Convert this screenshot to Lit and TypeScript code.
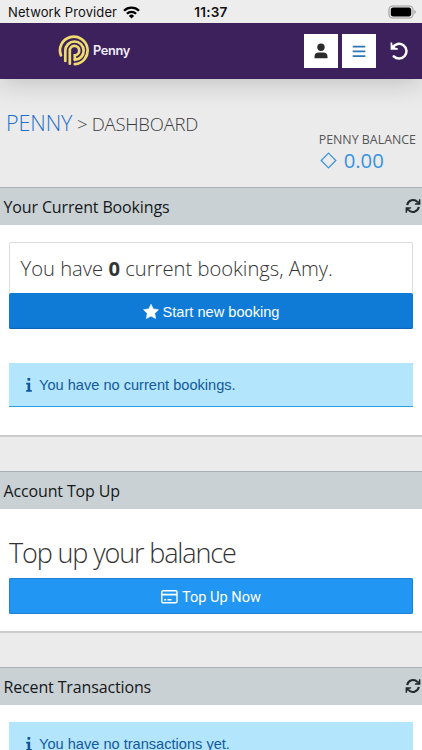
import { LitElement, html, css } from "lit";
import { customElement, property } from "lit/decorators.js";

const refresh = html`<svg class="refresh" viewBox="0 0 16 16" width="16" height="16">
  <g fill="none" stroke="#22282b" stroke-width="2">
    <path d="M2.2 7.1A6 6 0 0 1 12.6 4.1" /><path d="M13.8 8.9A6 6 0 0 1 3.4 11.9" />
  </g>
  <path fill="#22282b" d="M15.4 1.3v5.5H9.9v-1.4l1.6-.2 2.3-2.3.2-1.6zM.6 14.7V9.2h5.5v1.4l-1.6.2-2.3 2.3-.2 1.6z" />
</svg>`;

@customElement("status-bar")
export class StatusBar extends LitElement {
  static styles = css`
    :host { display: flex; align-items: center; height: 23px; background: #ededee; color: #111;
      font: 13px/23px Inter, sans-serif; padding: 1px 6px 0 8px; box-sizing: border-box; position: relative; z-index: 1; }
    .carrier { flex: 1; display: flex; align-items: center; gap: 6px; letter-spacing: 0.11px; }
    .time { font-size: 13.6px; font-weight: 600; letter-spacing: 0.2px; margin-right: 2px; }
    .battery { flex: 1; display: flex; justify-content: flex-end; margin-top: -1px; }
    svg { display: block; }
  `;
  render() {
    return html`
      <div class="carrier">
        <span>Network Provider</span>
        <svg width="17" height="13" viewBox="0 0 17 13" fill="none" stroke="#000" stroke-width="2.3">
          <path d="M1 4.7a10.6 10.6 0 0 1 15 0" /><path d="M3.9 7.7a6.5 6.5 0 0 1 9.2 0" />
          <path d="M8.5 12.6 5.9 9.9a3.7 3.7 0 0 1 5.2 0z" fill="#000" stroke="none" />
        </svg>
      </div>
      <div class="time">11:37</div>
      <div class="battery">
        <svg width="28" height="14" viewBox="0 0 28 14">
          <rect x="1" y="1" width="24" height="12" rx="3.6" fill="none" stroke="#9b9b9d" stroke-width="1.1" />
          <rect x="2.8" y="2.6" width="20.4" height="8.8" rx="2.2" />
          <path d="M26.4 5v4q1.3-.7 1.3-2t-1.3-2z" fill="#9b9b9d" />
        </svg>
      </div>`;
  }
}

@customElement("top-nav")
export class TopNav extends LitElement {
  static styles = css`
    :host { display: flex; align-items: center; height: 56px; background: #3d215d; padding: 0 14px 0 58px;
      box-sizing: border-box; box-shadow: 0 3px 28px rgba(0, 0, 0, 0.2); position: relative; }
    .brand { flex: 1; display: flex; align-items: center; gap: 3px; color: #f2edf8;
      font: 600 12.8px/16px Inter, sans-serif; letter-spacing: -0.35px; }
    .tile { width: 34px; height: 34px; background: #fff; margin-right: 4px; display: grid; place-items: center; }
    .undo { margin-left: 10px; }
    svg { display: block; }
  `;
  render() {
    return html`
      <div class="brand">
        <svg width="32" height="32" viewBox="0 0 32 32" fill="none" stroke="#efdc6c" stroke-width="2.7" stroke-linecap="round">
          <path d="M2.9 20.3A13.8 13.8 0 1 1 16.8 29.2" />
          <path d="M7.3 26V15.6A9.2 9.2 0 1 1 16.8 24.9" />
          <path d="M11.8 28.7V15.8A4.7 4.7 0 1 1 16.8 20.3V24" />
        </svg>
        <span>Penny</span>
      </div>
      <div class="tile"><svg width="14" height="16" viewBox="0 0 14 16" fill="#2b2b2b">
        <circle cx="7" cy="4.2" r="3.7" /><path d="M.5 15.3v-1.6A4.3 4.3 0 0 1 4.8 9.5h4.4a4.3 4.3 0 0 1 4.3 4.2v1.6z" /></svg></div>
      <div class="tile"><svg width="14" height="13" viewBox="0 0 14 13" stroke="#2e75b6" stroke-width="1.7">
        <path d="M.7 1.6h12.6M.7 6.4h12.6M.7 11.2h12.6" /></svg></div>
      <svg class="undo" width="18" height="18" viewBox="0 0 18 18" fill="none" stroke="#fff" stroke-width="2.5">
        <path d="M2.7 5.4A7.4 7.4 0 1 1 3.8 14.4" stroke-linecap="round" /><path d="M.6.6v7.2h7.2v-1.6L5 5.6 2.4 3 2.2.6z" fill="#fff" stroke="none" />
      </svg>`;
  }
}

@customElement("app-panel")
export class AppPanel extends LitElement {
  @property() heading = "";
  @property({ type: Boolean }) refreshable = false;
  static styles = css`
    :host { display: block; background: #fff; border-bottom: 2px solid #cbcbcd; }
    header { height: 38px; box-sizing: border-box; border-top: 1px solid #a9b0b4; background: #cad1d4;
      display: flex; align-items: center; justify-content: space-between; padding: 0 1px 0 3.5px;
      color: #14181a; font: 16px/24px "Open Sans", sans-serif; }
    .title { letter-spacing: -0.14px; }
    .refresh { display: block; margin-top: -2px; }
    .body { padding: 17px 9px 0; }
  `;
  render() {
    return html`<header><span class="title">${this.heading}</span>${this.refreshable ? refresh : ""}</header>
      <div class="body"><slot></slot></div>`;
  }
}

@customElement("info-alert")
export class InfoAlert extends LitElement {
  static styles = css`
    :host { display: flex; align-items: center; height: 44px; box-sizing: border-box; background: #b3e5fc;
      border-bottom: 1px solid #2c9fdc; padding: 1px 0 0 17px; gap: 7px; color: #125a9c;
      font: 14.6px/20px "Liberation Sans", sans-serif; }
    svg { display: block; }
  `;
  render() {
    return html`<svg width="6" height="14" viewBox="0 0 6 14" fill="#0f569b">
        <rect x="1.5" y="0" width="2.7" height="2.7" rx=".6" /><path d="M.2 4.7h4v7.2h1.6v1.8H.2v-1.8h1.4V6.5H.2z" />
      </svg><span><slot></slot></span>`;
  }
}

@customElement("app-root")
export class AppRoot extends LitElement {
  static styles = css`
    :host { display: block; height: 750px; overflow: hidden; background: #ecebec; font-family: "Open Sans", sans-serif; }
    .intro { height: 108px; box-sizing: border-box; display: grid; grid-template-columns: 1fr auto; padding: 29px 6px 0; }
    .crumbs { font-size: 18.5px; line-height: 30px; font-weight: 300; color: #3c3c3c; letter-spacing: -0.24px; white-space: nowrap; }
    .crumbs a { font-size: 21.5px; color: #1f6fc6; letter-spacing: -0.1px; }
    .balance { padding-top: 24px; color: #555; font-size: 12.4px; line-height: 16px; }
    .amount { display: flex; align-items: center; gap: 7px; color: #3593df; font-size: 20.3px; line-height: 25px; padding-left: 1px; }
    .bookings { height: 250px; box-sizing: border-box; }
    .topup { height: 162px; box-sizing: border-box; margin: 34px 0; }
    .greeting { height: 51px; box-sizing: border-box; border: 1px solid #dcdcdc; border-bottom: 0; border-radius: 2px 2px 0 0;
      padding: 10px 10.5px 0; font-size: 20.2px; line-height: 30px; font-weight: 300; color: #333; white-space: nowrap; }
    .greeting b { font-weight: 700; }
    .button { height: 36px; box-sizing: border-box; border-radius: 2px; background: #0f7bd7; color: #fff; display: flex;
      align-items: center; justify-content: center; gap: 4px; box-shadow: inset 0 -1px 1px #0a63b5; padding-top: 1px;
      font: 14.6px/20px "Liberation Sans", sans-serif; }
    .light { background: #2196f3; box-shadow: inset 0 0 0 1px #1c80d3; font: 14.6px/20px Roboto, sans-serif; padding-top: 2px; }
    .alert { margin-top: 34px; }
    .lead { font-size: 27px; line-height: 36px; font-weight: 300; color: #333; letter-spacing: -1.13px; margin: 9px 0 7px; white-space: nowrap; }
    svg { display: block; }
  `;
  render() {
    return html`
      <status-bar></status-bar>
      <top-nav></top-nav>
      <div class="intro">
        <div class="crumbs"><a>PENNY</a> &gt; DASHBOARD</div>
        <div class="balance">
          <div class="label">PENNY BALANCE</div>
          <div class="amount">
            <svg width="17" height="17" viewBox="0 0 17 17" fill="none" stroke="currentColor" stroke-width="1.2"><path d="m8.5 1.2 7.3 7.3-7.3 7.3L1.2 8.5z" /></svg>
            <span>0.00</span>
          </div>
        </div>
      </div>
      <app-panel class="bookings" heading="Your Current Bookings" refreshable>
        <div class="greeting">You have <b>0</b> current bookings, Amy.</div>
        <div class="button">
          <svg width="16" height="15" viewBox="0 0 16 15" fill="#fff"><path d="m8 .3 2.3 4.6 5.2.8-3.7 3.6.8 5.2L8 12.1l-4.6 2.4.8-5.2L.5 5.7l5.2-.8z" stroke="#fff" stroke-width=".6" stroke-linejoin="round" /></svg>
          <span>Start new booking</span>
        </div>
        <info-alert class="alert">You have no current bookings.</info-alert>
      </app-panel>
      <app-panel class="topup" heading="Account Top Up">
        <div class="lead">Top up your balance</div>
        <div class="button light">
          <svg width="17" height="14" viewBox="0 0 17 14" fill="none" stroke="#fff" stroke-width="1.4"><rect x=".8" y=".8" width="15.2" height="12" rx="1.3" /><path d="M1 4.6h15" stroke-width="1.8" /><path d="M3.2 9.7h2M6.5 9.7h4" /></svg>
          <span>Top Up Now</span>
        </div>
      </app-panel>
      <app-panel heading="Recent Transactions" refreshable>
        <info-alert>You have no transactions yet.</info-alert>
      </app-panel>`;
  }
}
